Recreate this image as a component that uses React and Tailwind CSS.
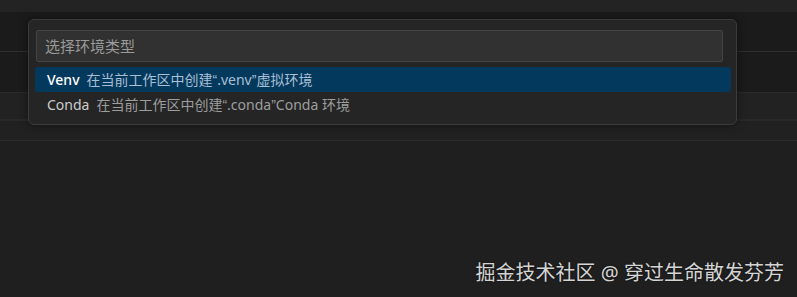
const font = "font-['Noto_Sans','Noto_Sans_CJK_SC',sans-serif]";

// quotes come out full-width from the CJK face, force a latin one
function Q({ children }) {
  return <span className="font-['Liberation_Sans',sans-serif]">{children}</span>;
}

function Row({ label, children, selected }) {
  return (
    <div
      className={`flex items-center h-[25px] px-[12px] rounded-[3px] ${
        selected ? "bg-[#04395e]" : ""
      }`}
    >
      <span
        className={`text-[14px] ${
          selected ? "text-white font-medium" : "text-[#cccccc]"
        }`}
      >
        {label}
      </span>
      <span
        className={`ml-[7px] text-[14px] ${
          selected ? "text-[#a9bfd3]" : "text-[#9d9d9d]"
        }`}
      >
        {children}
      </span>
    </div>
  );
}

export default function App() {
  return (
    <div className={`relative w-[797px] h-[297px] overflow-hidden bg-[#1f1f1f] ${font}`}>
      {/* editor chrome behind the picker */}
      <div className="h-[12px] bg-[#232323]" />
      <div className="h-[40px] bg-[#1b1b1b] border-b border-[#2f2f2f]" />
      <div className="h-[41px] bg-[#1b1b1b] border-b border-[#2a2a2a]" />
      <div className="h-[28px] bg-[#222222] border-b-2 border-[#282828]" />
      <div className="h-[20px] bg-[#212121] border-b border-[#2b2b2b]" />

      {/* quick pick */}
      <div className="absolute left-[28px] top-[19px] w-[709px] h-[106px] rounded-[6px] border border-[#3b3b3b] bg-[#252526] shadow-[0_0_8px_rgba(0,0,0,0.5)]">
        <div className="mt-[10px] ml-[7px] mr-[13px] h-[32px] border border-[#434343] bg-[#313131] rounded-[2px] flex items-center px-[8px]">
          <span className="text-[15px] text-[#9a9a9a]">选择环境类型</span>
        </div>
        <div className="mt-[5px] ml-[6px] mr-[5px] flex flex-col">
          <Row label="Venv" selected>
            在当前工作区中创建<Q>“</Q>.venv<Q>”</Q>虚拟环境
          </Row>
          <Row label="Conda">
            在当前工作区中创建<Q>“</Q>.conda<Q>”</Q>Conda 环境
          </Row>
        </div>
      </div>

      {/* watermark */}
      <div className="absolute right-[13px] top-[258px] text-[20px] leading-[30px] text-[#d4d4d4] [text-shadow:0_0_2px_rgba(0,0,0,0.6)]">
        掘金技术社区 @ 穿过生命散发芬芳
      </div>
    </div>
  );
}
